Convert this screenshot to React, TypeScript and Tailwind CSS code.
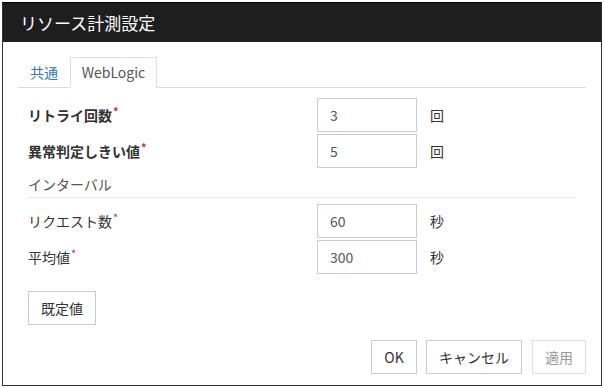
const font = { fontFamily: '"Noto Sans CJK JP", "Noto Sans", sans-serif' }

function Req() {
  return <span className="relative -top-[5px] ml-[1px] text-[11px] text-[#c9302c]">*</span>
}

function Row({ label, value, unit, bold }: { label: string; value: string; unit: string; bold?: boolean }) {
  return (
    <div className="flex h-[34px] items-center">
      <div className={`w-[289px] text-[14px] text-[#333] ${bold ? "font-bold" : ""}`}>
        {label}
        <Req />
      </div>
      <div className="flex h-[34px] w-[100px] items-center border border-[#ccc] px-[12px] text-[14px] text-[#555]">
        {value}
      </div>
      <div className="ml-[13px] text-[14px] text-[#333]">{unit}</div>
    </div>
  )
}

export default function App() {
  return (
    <div className="h-[388px] w-[604px] bg-white pl-[2px] pt-[2px]" style={font}>
      <div className="flex h-[384px] w-[600px] flex-col border border-[#333] border-t-black">
        <div className="flex h-[39px] items-center bg-[#1e1e1e] px-[17px] text-[17px] text-white">
          リソース計測設定
        </div>

        <div className="px-[15px] pt-[15px]">
          <div className="flex h-[31px] border-b border-[#ddd]">
            <div className="flex w-[52px] items-center justify-center text-[14px] text-[#337ab7]">共通</div>
            <div className="-mb-[1px] flex w-[87px] items-center justify-center border border-[#ddd] border-b-white bg-white text-[14px] text-[#555]">
              WebLogic
            </div>
          </div>

          <div className="px-[10px] pt-[10px]">
            <div className="flex flex-col gap-[2px]">
              <Row label="リトライ回数" value="3" unit="回" bold />
              <Row label="異常判定しきい値" value="5" unit="回" bold />
            </div>
            <div className="flex h-[30px] items-center border-b border-[#e5e5e5] pt-[4px] text-[14px] text-[#555]">
              インターバル
            </div>
            <div className="mt-[6px] flex flex-col gap-[2px]">
              <Row label="リクエスト数" value="60" unit="秒" />
              <Row label="平均値" value="300" unit="秒" />
            </div>
            <div className="mt-[17px] flex">
              <button className="flex h-[34px] w-[68px] items-center justify-center border border-[#ccc] bg-white text-[14px] text-[#333]">
                既定値
              </button>
            </div>
          </div>

          <div className="mt-[15px] flex justify-end">
            <button className="flex h-[34px] w-[46px] items-center justify-center border border-[#ccc] bg-white text-[14px] text-[#333]">
              OK
            </button>
            <button className="ml-[9px] flex h-[34px] w-[96px] items-center justify-center border border-[#ccc] bg-white text-[14px] text-[#333]">
              キャンセル
            </button>
            <button className="ml-[10px] flex h-[34px] w-[54px] items-center justify-center border border-[#ddd] bg-white text-[14px] text-[#999]">
              適用
            </button>
          </div>
        </div>
      </div>
    </div>
  )
}
